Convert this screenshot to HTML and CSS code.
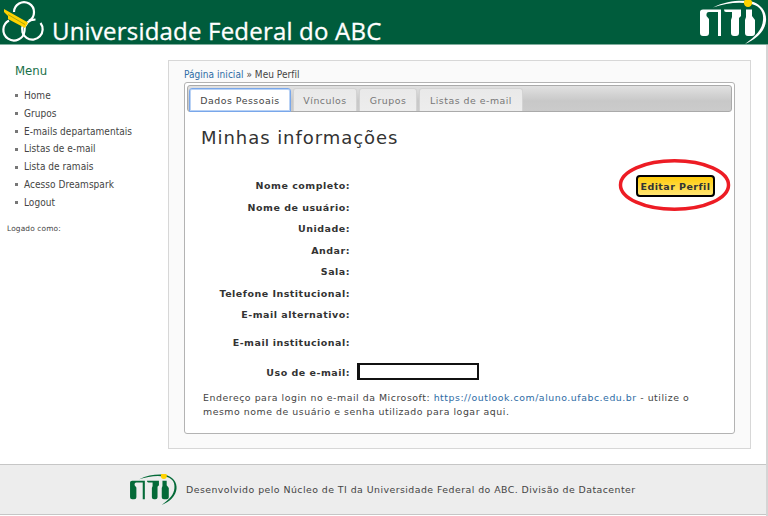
FILE: index.html
```
<!DOCTYPE html>
<html lang="pt-BR">
<head>
<meta charset="utf-8">
<title>Meu Perfil</title>
<link rel="stylesheet" href="styles.css">
</head>
<body>
<svg class="defs" width="0" height="0" aria-hidden="true">
  <symbol id="nti" viewBox="0 0 68 44">
    <path fill="currentColor" d="M3 9.500H21V36H18V12H9Q6 12 6.500 16L9 19V33Q9 36 6 36H3Q0 36 0 33V12Q0 9.500 3 9.500Z"/>
    <path fill="currentColor" d="M24 9.500H41V16L39 18V33Q39 36 36 36H34Q31 36 31 33V20L32 17V12H26Q24 12 24 9.500Z"/>
    <path fill="currentColor" d="M46 9.500H52V16L55 20V33Q55 36 52 36H48Q45 36 45 33V20L46 17Z"/>
    <path fill="currentColor" d="M13 7.500C25 1 39 0 49 1C61 3 67 12 66 21C65 31 57 39 45 44C56 36 62.500 29 63 20C64 11 59 5 49 3.600C38 1.500 25 3.500 13 7.500Z"/>
    <circle cx="48" cy="2.800" r="4.200" fill="#ffd200"/>
  </symbol>
</svg>
<div class="page">
  <header class="header">
    <svg class="crest" viewBox="0 0 46 44" aria-hidden="true">
      <g fill="none" stroke="#fff" stroke-width="2.200">
        <path d="M14 12A10 10 0 1 1 29 20.800"/>
        <path d="M9 20.500A10.600 10.600 0 1 0 24.500 31Q24.500 20 35.500 19.500"/>
        <path d="M23 25A10.300 10.300 0 1 0 40.500 23"/>
      </g>
      <path fill="#ffd200" d="M4 9L28 22.500L25 28L8 19V16L4 12Z"/>
      <path d="M8 14.500L25 24.500" stroke="#8f9a12" stroke-width=".8"/>
    </svg>
    <h1 class="university">Universidade Federal do ABC</h1>
    <svg class="nti"><use href="#nti"/></svg>
  </header>
  <div class="body">
    <aside class="sidebar">
      <h2 class="menu-title">Menu</h2>
      <ul class="menu">
        <li>Home</li><li>Grupos</li><li>E-mails departamentais</li><li>Listas de e-mail</li><li>Lista de ramais</li><li>Acesso Dreamspark</li><li>Logout</li>
      </ul>
      <p class="logged">Logado como:</p>
    </aside>
    <main class="content">
      <nav class="crumbs"><a>Página inicial</a> » Meu Perfil</nav>
      <section class="panel">
        <div class="tabs">
          <a class="tab active">Dados Pessoais</a><a class="tab t2">Vínculos</a><a class="tab t3">Grupos</a><a class="tab t4">Listas de e-mail</a>
        </div>
        <h2 class="heading">Minhas informações</h2>
        <div class="info">
          <dl class="fields">
            <dt>Nome completo:</dt><dt>Nome de usuário:</dt><dt>Unidade:</dt><dt>Andar:</dt><dt>Sala:</dt><dt>Telefone Institucional:</dt><dt>E-mail alternativo:</dt><dt class="inst">E-mail institucional:</dt><dt class="use">Uso de e-mail:</dt>
          </dl>
          <div class="value"></div>
          <div class="action">
            <button class="edit">Editar Perfil</button>
            <svg class="ring" viewBox="0 0 114 54" aria-hidden="true"><ellipse cx="57" cy="27" rx="54.500" ry="24.500"/></svg>
          </div>
        </div>
        <p class="note">Endereço para login no e-mail da Microsoft: <a>https://outlook.com/aluno.ufabc.edu.br</a> - utilize o<br>mesmo nome de usuário e senha utilizado para logar aqui.</p>
      </section>
    </main>
  </div>
  <footer class="footer">
    <svg class="nti-small"><use href="#nti"/></svg>
    <span>Desenvolvido pelo Núcleo de TI da Universidade Federal do ABC. Divisão de Datacenter</span>
  </footer>
</div>
</body>
</html>
```
FILE: styles.css
```
* { box-sizing: border-box; }
body { margin: 0; background: #fff; color: #444; font-family: "DejaVu Sans", sans-serif; font-size: 9.4px; overflow: hidden; }
h1, h2, p, ul, dl { margin: 0; padding: 0; font-weight: normal; }
a { color: #2e6ca5; }
.defs { display: block; height: 0; }
.page { width: 768px; height: 516px; border-right: 2px solid #d5d5d5; display: flex; flex-direction: column; }
.header { width: 768px; height: 45px; flex: none; background: #005c3c; border-bottom: 1px solid #80ad9d; display: flex; color: #fff; }
.crest { width: 46px; height: 44px; flex: none; }
.university { margin: 14px 0 0 6px; font: 500 24px/34px "Open Sans", sans-serif; white-space: nowrap; width: 648px; letter-spacing: .2px; -webkit-text-stroke: .3px #fff; }
.nti { width: 68px; height: 44px; flex: none; }
.body { display: flex; height: 419px; flex: none; }
.sidebar { width: 168px; padding-top: 17px; font-family: "DejaVu Sans Condensed", "DejaVu Sans", sans-serif; }
.menu-title { margin-left: 15px; font-size: 13px; line-height: 18px; color: #187048; }
.menu { list-style: none; margin: 7px 0 0 15px; font-size: 10px; line-height: 17.8px; letter-spacing: .04px; }
.menu li { display: flex; align-items: center; gap: 6px; }
.menu li::before { content: ""; width: 3px; height: 3px; background: #777; }
.logged { margin: 11px 0 0 7px; font: 7.4px/12px "DejaVu Sans", sans-serif; letter-spacing: .15px; }
.content { width: 583px; height: 389px; margin-top: 15px; border: 1px solid #d7d7d7; background: #fafafa; padding: 6px 15px 0; }
.crumbs { height: 15px; font-size: 10px; line-height: 16px; letter-spacing: .04px; font-family: "DejaVu Sans Condensed", "DejaVu Sans", sans-serif; }
.panel { width: 551px; height: 352px; background: #fff; border: 1px solid #b3b3b3; border-radius: 3px; padding: 2px; }
.tabs { height: 27px; border: 1px solid #aaa; border-radius: 3px; background: linear-gradient(#e1e1e1, #c8c8c8 60%, #cbcbcb); display: flex; align-items: flex-end; padding-left: 1px; letter-spacing: .5px; }
.tab { height: 23px; line-height: 23px; margin-right: 2px; text-align: center; background: linear-gradient(#e9e9e9, #ededed); border: 1px solid #d3d3d3; border-bottom: 0; border-radius: 3px 3px 0 0; color: #777; width: 64px; }
.tab.active { width: 102px; height: 24px; background: #fff; border: 1px solid #79a7ea; box-shadow: inset 0 0 0 1px #b9d2f5; color: #444; margin-bottom: -1px; }
.tab.t3 { width: 58px; }
.tab.t4 { width: 104px; }
.heading { margin: 13px 0 0 14px; font-size: 18px; line-height: 26px; letter-spacing: .95px; color: #333; }
.info { display: flex; height: 232px; padding-top: 24px; }
.fields { width: 163px; text-align: right; font-weight: bold; font-size: 9.49px; line-height: 21.5px; letter-spacing: .5px; color: #333; }
.fields .inst { margin-top: 6.5px; }
.fields .use { margin-top: 8.5px; }
.value { align-self: flex-end; width: 122px; height: 17px; margin: 0 0 3px 7px; border: 2px solid #111; border-left-width: 3px; }
.action { position: relative; margin: 0 0 0 157px; height: 22px; }
.edit { display: block; width: 79px; height: 22px; padding: 0; border: 2px solid #000; border-radius: 4px; background: linear-gradient(#ffcc0a, #ffe571); font: bold 9.49px "DejaVu Sans", sans-serif; letter-spacing: .45px; color: #333; white-space: nowrap; }
.ring { position: absolute; left: -18px; top: -17px; width: 113px; height: 54px; fill: none; stroke: #ed1c24; stroke-width: 3.5; }
.note { margin: 8px 0 0 16px; line-height: 14px; letter-spacing: .53px; white-space: nowrap; }
.footer { height: 51px; flex: none; background: #ededed; border-top: 1px solid #c6c6c6; border-bottom: 1px solid #c6c6c6; display: flex; align-items: center; padding-left: 130px; letter-spacing: .45px; white-space: nowrap; }
.nti-small { width: 48px; height: 31px; color: #046a38; margin-right: 8px; }
```
